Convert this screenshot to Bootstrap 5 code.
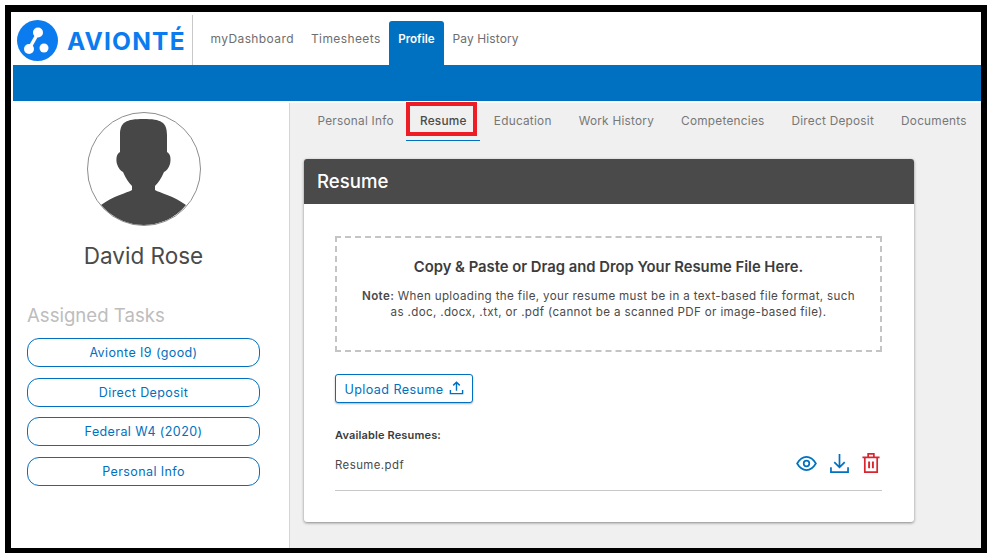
<!DOCTYPE html>
<html lang="en">
<head>
    <meta charset="UTF-8">
    <meta name="viewport" content="width=device-width, initial-scale=1.0">
    <title>Profile - Resume</title>
    <link href="https://cdn.jsdelivr.net/npm/bootstrap@5.3.0/dist/css/bootstrap.min.css" rel="stylesheet">
    <style>
        html, body { height: 100%; overflow: hidden; }
        body { font-family: "Inter", "Open Sans", sans-serif; background: #fff; color: #4a4a4a; padding: 5px 2px 0 5px; }
        .shot-frame { width: 982px; height: 548px; border: solid #000; border-width: 7px 6px 5px 6px; overflow: hidden; position: relative; background: #fff; }
        .top-bar { height: 53px; padding-left: 6px; }
        .brand-box { width: 176px; height: 50px; margin-top: 3px; border-right: 1px solid #c8c8c8; gap: 9px; color: #0a7cf0; font-weight: 700; font-size: 24.5px; letter-spacing: 1.2px; }
        .brand-box span { padding-top: 3px; }
        .brand-box svg { flex: none; }
        .top-links { padding-left: 9px; margin-top: 9px; font-size: 12px; letter-spacing: .4px; }
        .top-links a { color: #6e6e6e; text-decoration: none; padding: 0 8.5px; height: 44px; line-height: 36px; }
        .top-links a.is-on { background: #0070c0; color: #fff; font-size: 11.6px; font-weight: 600; letter-spacing: 0; padding: 0 9px; border-radius: 3px 3px 0 0; }
        .top-links a:last-child { letter-spacing: .1px; padding-left: 9px; }
        .blue-bar { height: 36px; margin-left: 2px; background: #0070c0; }
        .page-body { height: 447px; margin-top: 2px; margin-left: -1px; box-shadow: inset 0 4px 5px -3px rgba(0,0,0,.15); }
        .side-col { width: 280px; flex: none; background: #fff; border-right: 1px solid #d4d4d4; padding: 9px 29px 0 17px; }
        .avatar-wrap { width: 114px; height: 114px; margin: 0 auto; border-radius: 50%; border: 1px solid #8e8e8e; overflow: hidden; }
        .person-name { font-size: 22.5px; text-align: center; margin: 16px 0 0; line-height: 28px; color: #4a4a4a; }
        .tasks-title { font-size: 18.6px; color: #bdbdbd; margin: 32px 0 10px; line-height: 26px; }
        .task-btn { display: block; height: 29px; line-height: 23px; padding: 0; font-size: 12.5px; letter-spacing: .4px; border: 1px solid #0070c0; border-radius: 12px; color: #0070c0; background: #fff; margin-bottom: 10.6px; width: 100%; }
        .main-col { background: #f0f0f0; padding-left: 14px; }
        .sub-tabs { height: 38px; font-size: 11.8px; letter-spacing: .25px; white-space: nowrap; }
        .sub-tabs a { color: #777; text-decoration: none; height: 38px; line-height: 36px; padding: 0 13.5px; }
        .sub-tabs a.is-on { color: #4a4a4a; font-weight: 500; border-bottom: 1px solid #0070c0; width: 74px; text-align: center; padding: 0; margin-left: -1px; }
        .red-mark { position: absolute; left: 395px; top: 90px; width: 71px; height: 34px; border: 4px solid #ee1c25; }
        .resume-box { width: 610px; height: 363px; margin-top: 18px; background: #fff; border-radius: 3px; box-shadow: 0 1px 3px rgba(0,0,0,.45); }
        .resume-head { height: 45px; line-height: 45px; background: #4a4a4a; color: #fff; font-size: 18.6px; font-weight: 500; padding-left: 13px; border-radius: 3px 3px 0 0; }
        .resume-inner { padding: 32px 32px 0 31px; }
        .drop-area { height: 116px; border: 2px dashed #c4c4c4; text-align: center; padding-top: 17px; }
        .drop-area h6 { font-size: 14.8px; font-weight: 600; line-height: 24px; margin: 0 0 9px; color: #3c3c3c; }
        .drop-area p { font-size: 11.6px; letter-spacing: .35px; line-height: 16px; margin: 0 auto; width: 500px; color: #4a4a4a; }
        .upload-btn { height: 29px; width: 138px; margin-top: 22px; border: 1px solid #0070c0; border-radius: 3px; color: #0070c0; background: #fff; font-size: 12.6px; letter-spacing: .4px; padding: 4px 0 0 0; gap: 5px; box-shadow: 0 1px 2px rgba(0,0,0,.3); }
        .upload-btn svg { margin-top: -5px; }
        .avail-label { font-size: 11px; font-weight: 600; letter-spacing: .15px; margin: 24px 0 0; line-height: 16px; color: #3c3c3c; }
        .file-row { height: 44px; margin-top: 4px; border-bottom: 1px solid #c8c8c8; padding-bottom: 6px; font-size: 11.4px; letter-spacing: .45px; }
        .file-icons { gap: 13px; margin-right: 2px; margin-bottom: 5px; }
    </style>
</head>
<body>
    <div class="shot-frame">
        <!-- Top nav -->
        <div class="top-bar d-flex">
            <div class="brand-box d-flex align-items-center">
                <svg width="41" height="41" viewBox="0 0 41 41"><circle cx="20.5" cy="20.5" r="20.5" fill="#0a7cf0"/><path d="M21 13 L12 29" stroke="#fff" stroke-width="3.5" fill="none"/><circle cx="21" cy="12.5" r="5" fill="#fff"/><circle cx="12" cy="29" r="5" fill="#fff"/><circle cx="27" cy="28" r="4.5" fill="#fff"/></svg>
                <span>AVIONTÉ</span>
            </div>
            <div class="top-links d-flex">
                <a href="#">myDashboard</a>
                <a href="#">Timesheets</a>
                <a href="#" class="is-on">Profile</a>
                <a href="#">Pay History</a>
            </div>
        </div>
        <div class="blue-bar"></div>

        <div class="page-body d-flex">
            <!-- Left column -->
            <div class="side-col">
                <div class="avatar-wrap">
                    <svg width="112" height="112" viewBox="0 0 112 112"><path d="M32 22 C32 9 38 6 55.5 6 C73 6 79 9 79 22 V39 C83 41 83 47 82 51 C81 55 78 58 76 59 C73 66 70 70 67 73 V77 C72 80 86 83 98 92 C88 105 72 112 55.5 112 C39 112 23 105 13 92 C25 83 39 80 44 77 V73 C41 70 38 66 35 59 C33 58 30 55 29 51 C28 47 28 41 32 39 Z" fill="#474747"/></svg>
                </div>
                <p class="person-name">David Rose</p>
                <p class="tasks-title">Assigned Tasks</p>
                <button class="btn task-btn">Avionte I9 (good)</button>
                <button class="btn task-btn">Direct Deposit</button>
                <button class="btn task-btn">Federal W4 (2020)</button>
                <button class="btn task-btn">Personal Info</button>
            </div>

            <!-- Main column -->
            <div class="main-col flex-grow-1">
                <div class="sub-tabs d-flex">
                    <a href="#">Personal Info</a>
                    <a href="#" class="is-on">Resume</a>
                    <a href="#">Education</a>
                    <a href="#">Work History</a>
                    <a href="#">Competencies</a>
                    <a href="#">Direct Deposit</a>
                    <a href="#">Documents</a>
                </div>
                <div class="resume-box">
                    <div class="resume-head">Resume</div>
                    <div class="resume-inner">
                        <div class="drop-area">
                            <h6>Copy &amp; Paste or Drag and Drop Your Resume File Here.</h6>
                            <p><b class="fw-semibold">Note:</b> When uploading the file, your resume must be in a text-based file format, such as .doc, .docx, .txt, or .pdf (cannot be a scanned PDF or image-based file).</p>
                        </div>
                        <button class="btn upload-btn d-flex align-items-center justify-content-center">Upload Resume
                            <svg width="15" height="16" viewBox="0 0 16 16" fill="none" stroke="#0070c0" stroke-width="1.5"><path d="M8 11 V2 M4.5 5.2 L8 1.8 L11.5 5.2 M1.5 10 V14 H14.5 V10"/></svg>
                        </button>
                        <p class="avail-label">Available Resumes:</p>
                        <div class="file-row d-flex justify-content-between align-items-center">
                            <span>Resume.pdf</span>
                            <div class="file-icons d-flex align-items-center">
                                <svg width="21" height="15" viewBox="0 0 22 16" fill="none" stroke="#0070c0" stroke-width="1.8"><path d="M1 8 C4 3 7 1 11 1 C15 1 18 3 21 8 C18 13 15 15 11 15 C7 15 4 13 1 8 Z"/><circle cx="11" cy="8" r="3"/></svg>
                                <svg width="19" height="20" viewBox="0 0 20 21" fill="none" stroke="#0070c0" stroke-width="1.8"><path d="M10 1 V15 M4.5 9.5 L10 15 L15.5 9.5 M1 15 V20 H19 V15"/></svg>
                                <svg width="18" height="20" viewBox="0 0 18 21" fill="none" stroke="#d9262e" stroke-width="1.8"><path d="M0 4.5 H18 M6 4 V1 H12 V4 M2.5 5 V20 H15.5 V5"/><path d="M7 9 V16 M11 9 V16" stroke-width="2"/></svg>
                            </div>
                        </div>
                    </div>
                </div>
            </div>
        </div>
        <div class="red-mark"></div>
    </div>
    <script src="https://cdn.jsdelivr.net/npm/bootstrap@5.3.0/dist/js/bootstrap.bundle.min.js"></script>
</body>
</html>
